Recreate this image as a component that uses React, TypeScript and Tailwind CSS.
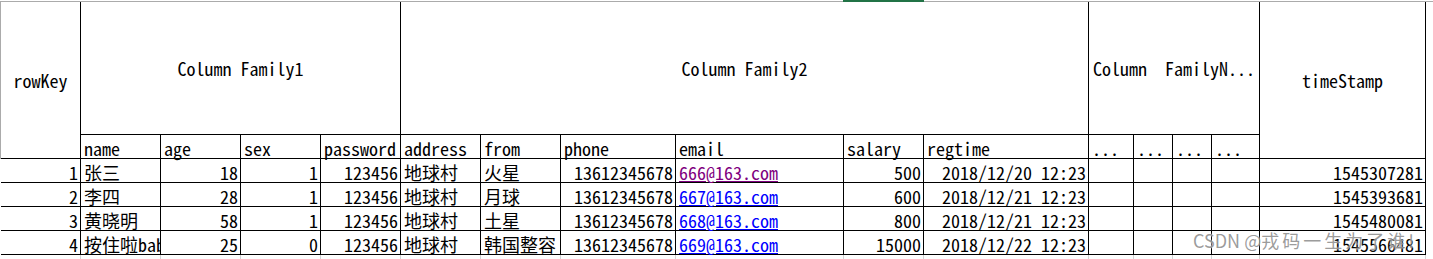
import React from "react";

type Row = {
  key: number;
  name: string;
  age: number;
  sex: number;
  pwd: string;
  addr: string;
  from: string;
  phone: string;
  email: string;
  visited: boolean;
  salary: number;
  reg: string;
  ts: string;
  clip?: boolean;
};

const rows: Row[] = [
  { key: 1, name: "张三", age: 18, sex: 1, pwd: "123456", addr: "地球村", from: "火星", phone: "13612345678", email: "666@163.com", visited: true, salary: 500, reg: "2018/12/20 12:23", ts: "1545307281" },
  { key: 2, name: "李四", age: 28, sex: 1, pwd: "123456", addr: "地球村", from: "月球", phone: "13612345678", email: "667@163.com", visited: false, salary: 600, reg: "2018/12/21 12:23", ts: "1545393681" },
  { key: 3, name: "黄晓明", age: 58, sex: 1, pwd: "123456", addr: "地球村", from: "土星", phone: "13612345678", email: "668@163.com", visited: false, salary: 800, reg: "2018/12/21 12:23", ts: "1545480081" },
  { key: 4, name: "按住啦baby", age: 25, sex: 0, pwd: "123456", addr: "地球村", from: "韩国整容", phone: "13612345678", email: "669@163.com", visited: false, salary: 15000, reg: "2018/12/22 12:23", ts: "1545566481", clip: true },
];

const cellBase = "border-r border-b border-black whitespace-nowrap flex items-end";

function Num({ children }: { children?: React.ReactNode }) {
  return <div className={`${cellBase} justify-end pr-[2px]`}>{children}</div>;
}

function Txt({ children, clip }: { children?: React.ReactNode; clip?: boolean }) {
  return <div className={`${cellBase} pl-[3px] ${clip ? "overflow-hidden" : ""}`}>{children}</div>;
}

const faintCols = 16;

export default function App() {
  return (
    <div className="relative w-[1433px] h-[259px] overflow-hidden bg-white text-black font-['Noto_Sans_Mono_CJK_SC','Liberation_Mono',monospace] text-[18px] leading-[20px]">
      {/* Excel column header bottom line with selected column marker */}
      <div className="flex h-[2px]">
        <div className="w-[843px] border-b border-[#ababab]" />
        <div className="w-[81px] bg-[#217346]" />
        <div className="flex-1 border-b border-[#ababab]" />
      </div>

      <div className="grid grid-cols-[1px_80px_80px_80px_80px_80px_80px_80px_115px_168px_80px_165px_45px_39px_39px_48px_166px] grid-rows-[133px_24px_24px_24px_24px_24px_4px]">
        {/* header row */}
        <div className="row-span-2 bg-[#ababab]" />
        <div className="row-span-2 border-r border-b border-black flex items-center justify-center">rowKey</div>
        <div className="col-span-4 border-r border-b border-black flex items-center justify-center">Column Family1</div>
        <div className="col-span-6 border-r border-b border-black flex items-center justify-center">Column Family2</div>
        <div className="col-span-4 border-r border-b border-black flex items-center justify-center whitespace-pre">Column  FamilyN...</div>
        <div className="row-span-2 border-r border-b border-black flex items-center justify-center">timeStamp</div>

        {/* sub header row */}
        <Txt>name</Txt>
        <Txt>age</Txt>
        <Txt>sex</Txt>
        <Txt>password</Txt>
        <Txt>address</Txt>
        <Txt>from</Txt>
        <Txt>phone</Txt>
        <Txt>email</Txt>
        <Txt>salary</Txt>
        <Txt>regtime</Txt>
        <Txt>...</Txt>
        <Txt>...</Txt>
        <Txt>...</Txt>
        <Txt>...</Txt>

        {/* data rows */}
        {rows.map((r) => (
          <React.Fragment key={r.key}>
            <div />
            <Num>{r.key}</Num>
            <Txt clip={r.clip}>{r.name}</Txt>
            <Num>{r.age}</Num>
            <Num>{r.sex}</Num>
            <Num>{r.pwd}</Num>
            <Txt>{r.addr}</Txt>
            <Txt>{r.from}</Txt>
            <Num>{r.phone}</Num>
            <Txt>
              <span className={`underline ${r.visited ? "text-[#800080]" : "text-[#0000ff]"}`}>{r.email}</span>
            </Txt>
            <Num>{r.salary}</Num>
            <Num>{r.reg}</Num>
            <Txt />
            <Txt />
            <Txt />
            <Txt />
            <Num>{r.ts}</Num>
          </React.Fragment>
        ))}

        {/* faint excel gridlines below the table */}
        <div />
        {Array.from({ length: faintCols }).map((_, i) => (
          <div key={i} className="border-r border-[#d4d4d4]" />
        ))}
      </div>

      {/* CSDN watermark */}
      <div className="absolute left-[1193px] top-[228px] font-['Noto_Sans_CJK_SC',sans-serif] text-[18px] leading-[24px] text-[#8a8a8a]/85 whitespace-nowrap [text-shadow:0_0_2px_#ffffff]">
        CSDN @<span className="tracking-[3px]">戎码一生为了谁</span>!
      </div>
    </div>
  );
}
